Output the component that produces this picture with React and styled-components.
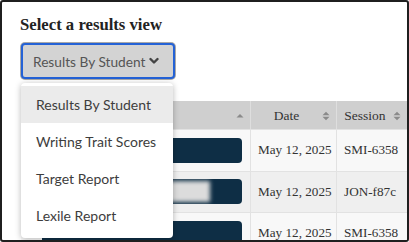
import React from "react";
import styled, { createGlobalStyle } from "styled-components";

const Global = createGlobalStyle`
  html, body { margin: 0; padding: 0; background: #ffffff; }
  * { box-sizing: border-box; }
`;

const Frame = styled.div`
  width: 409px;
  height: 242px;
  border: 2px solid #1f1f1f;
  border-radius: 3px;
  overflow: hidden;
  background: #ffffff;
  padding: 13px 0 0 19px;
  display: flex;
  flex-direction: column;
`;

const Heading = styled.h2`
  margin: 0 0 8px -1px;
  font-family: "Liberation Serif", "Times New Roman", serif;
  font-weight: 700;
  font-size: 16.7px;
  line-height: 20px;
  color: #222;
`;

const SelectWrap = styled.div`
  position: relative;
  width: 154px;
`;

const SelectButton = styled.div`
  height: 36px;
  width: 154px;
  border: 2px solid #2462d6;
  border-radius: 4px;
  box-shadow: 0 0 0 1px #a9a9a9;
  background: #d3d3d3;
  display: flex;
  align-items: center;
  gap: 4px;
  padding: 0 0 0 10px;
  font-family: Lato, "Liberation Sans", sans-serif;
  font-size: 13.7px;
  color: #555;
`;

const Menu = styled.ul`
  position: absolute;
  top: 40px;
  left: 0;
  width: 152px;
  height: 155px;
  margin: 0;
  padding: 3px 0;
  list-style: none;
  background: #fff;
  border-radius: 4px;
  box-shadow: 0 1px 6px rgba(0, 0, 0, 0.28);
  z-index: 5;
`;

const MenuItem = styled.li`
  height: 37px;
  display: flex;
  align-items: center;
  padding-left: 15px;
  font-family: Lato, "Liberation Sans", sans-serif;
  font-size: 14px;
  color: #3d3d3d;
  background: ${(p) => (p.$active ? "#ebebeb" : "transparent")};
`;

const Divider = styled.div`
  margin-top: 13px;
  height: 2px;
  background: #e4e4e4;
`;

const Table = styled.div`
  margin-top: 9px;
  display: grid;
  grid-template-columns: 229px 86px 71px;
  border-right: 1px solid #dcdcdc;
  font-family: "Liberation Serif", "Times New Roman", serif;
  color: #333;
`;

const HeadCell = styled.div`
  height: 28px;
  background: #cfcfcf;
  display: flex;
  align-items: center;
  padding: 2px 6px 0 0;
  border-left: ${(p) => (p.$first ? "none" : "1px solid #dedede")};
  font-size: 13.5px;
`;

const HeadLabel = styled.span`
  flex: 1;
  text-align: center;
`;

const Cell = styled.div`
  height: 41.5px;
  display: flex;
  align-items: center;
  justify-content: ${(p) => (p.$end ? "flex-end" : "flex-start")};
  padding: ${(p) => (p.$end ? "0 8px 0 0" : "0 0 0 7px")};
  background: ${(p) => (p.$alt ? "#efefef" : "#f8f8f8")};
  border-top: 1px solid #e2e2e2;
  border-left: ${(p) => (p.$first ? "none" : "1px solid #e2e2e2")};
  font-size: 13.2px;
  white-space: nowrap;
`;

const StudentButton = styled.div`
  width: 200px;
  height: 25px;
  border-radius: 4px;
  background: #0e2e45;
  display: flex;
  justify-content: flex-end;
  align-items: center;
  overflow: hidden;
`;

const Blur = styled.span`
  width: 64px;
  height: 21px;
  margin-right: 32px;
  background: #dcdcdc;
  filter: blur(2px);
`;

const Chevron = () => (
  <svg width="10" height="8" viewBox="0 0 10 8">
    <polyline points="1.5,2 5,5.5 8.5,2" fill="none" stroke="#444" strokeWidth="2.4" strokeLinecap="round" strokeLinejoin="round" />
  </svg>
);

const SortUp = () => (
  <svg width="8" height="10" viewBox="0 0 8 10">
    <polygon points="0.5,6.5 4,3 7.5,6.5" fill="#8a8a8a" />
  </svg>
);

const SortBoth = () => (
  <svg width="8" height="10" viewBox="0 0 8 10">
    <polygon points="0.5,4.3 4,0.8 7.5,4.3" fill="#8a8a8a" />
    <polygon points="0.5,5.7 4,9.2 7.5,5.7" fill="#8a8a8a" />
  </svg>
);

const rows = [
  { date: "May 12, 2025", session: "SMI-6358", blur: false },
  { date: "May 12, 2025", session: "JON-f87c", blur: true },
  { date: "May 12, 2025", session: "SMI-6358", blur: false },
];

const items = ["Results By Student", "Writing Trait Scores", "Target Report", "Lexile Report"];

export default function App() {
  return (
    <>
      <Global />
      <Frame>
        <Heading>Select a results view</Heading>
        <SelectWrap>
          <SelectButton>
            Results By Student
            <Chevron />
          </SelectButton>
          <Menu>
            {items.map((t, i) => (
              <MenuItem key={t} $active={i === 0}>
                {t}
              </MenuItem>
            ))}
          </Menu>
        </SelectWrap>
        <Divider />
        <Table>
          <HeadCell $first>
            <HeadLabel />
            <SortUp />
          </HeadCell>
          <HeadCell>
            <HeadLabel>Date</HeadLabel>
            <SortBoth />
          </HeadCell>
          <HeadCell>
            <HeadLabel>Session</HeadLabel>
            <SortBoth />
          </HeadCell>
          {rows.map((r, i) => (
            <React.Fragment key={i}>
              <Cell $first $end $alt={i === 1}>
                <StudentButton>{r.blur && <Blur />}</StudentButton>
              </Cell>
              <Cell $alt={i === 1}>{r.date}</Cell>
              <Cell $alt={i === 1}>{r.session}</Cell>
            </React.Fragment>
          ))}
        </Table>
      </Frame>
    </>
  );
}
